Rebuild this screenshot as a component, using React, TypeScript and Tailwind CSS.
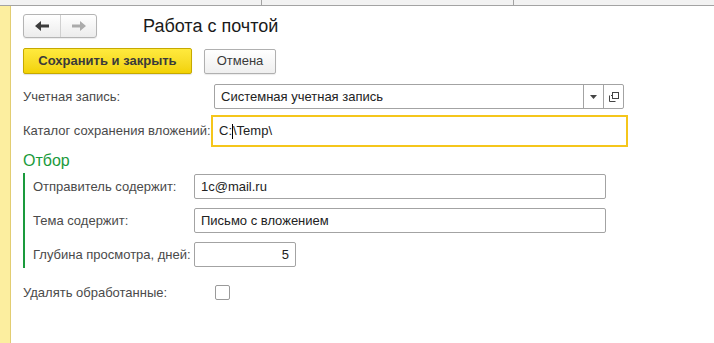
import React from 'react';

const font = "font-['Liberation_Sans',Arial,sans-serif]";

function NavButtons() {
	return (
		<div className=" flex h-[24px] w-[74px] rounded-[3px] border border-[#b4b4b4] bg-gradient-to-b from-white to-[#ececec] shadow-[0_1px_1px_rgba(0,0,0,0.08)]">
			<div className=" flex w-[37px] items-center justify-center border-r border-[#d0d0d0]">
				<svg width="14" height="10" viewBox="0 0 14 10">
					<path d="M0 5 L6 0 L6 3.5 L14 3.5 L14 6.5 L6 6.5 L6 10 Z" fill="#3c3c3c" />
				</svg>
			</div>
			<div className=" flex flex-1 items-center justify-center">
				<svg width="14" height="10" viewBox="0 0 14 10">
					<path d="M14 5 L8 0 L8 3.5 L0 3.5 L0 6.5 L8 6.5 L8 10 Z" fill="#ababab" />
				</svg>
			</div>
		</div>
	);
}

function Field({ children, className = '' }: { children?: React.ReactNode; className?: string }) {
	return (
		<div className={` flex h-[25px] items-center rounded-[2px] border border-[#a3a3a3] bg-white px-[6px] text-[13px] text-[#222] ${className}`}>
			{children}
		</div>
	);
}

export default function App() {
	return (
		<div className={` flex h-[343px] w-[714px] flex-col overflow-hidden bg-white ${font}`}>
			<div className=" flex h-[6px] border-b border-[#a3a3a3] bg-[#f2f2f2]">
				<div className=" w-[262px] border-r border-[#a3a3a3]" />
				<div className=" w-[252px] border-r border-[#a3a3a3]" />
				<div className=" flex-1" />
			</div>
			<div className=" flex flex-1">
				<div className=" w-[11px] border-r border-[#e2cd72] bg-[#fcee9f]" />
				<div className=" flex flex-1 flex-col pl-[12px] text-[13px] text-[#4a4a4a]">
					<div className=" mt-[8px] flex h-[24px] items-center">
						<NavButtons />
						<div className=" ml-[46px] text-[18px] leading-none text-[#1a1a1a]">Работа с почтой</div>
					</div>
					<div className=" mt-[10px] flex h-[26px] items-center gap-[12px]">
						<button className=" h-[26px] w-[169px] rounded-[2px] border border-[#c6a900] bg-gradient-to-b from-[#ffea3d] to-[#f2d200] text-[13px] font-bold text-[#3a3a3a] shadow-[0_1px_1px_rgba(0,0,0,0.12)]">
							Сохранить и закрыть
						</button>
						<button className=" h-[25px] w-[72px] rounded-[2px] border border-[#b0b0b0] bg-gradient-to-b from-white to-[#efefef] text-[13px] text-[#3a3a3a] shadow-[0_1px_1px_rgba(0,0,0,0.08)]">
							Отмена
						</button>
					</div>
					<div className=" mt-[10px] flex h-[25px] items-center">
						<div className=" w-[191px]">Учетная запись:</div>
						<div className=" flex h-[25px] w-[410px] items-center rounded-[2px] border border-[#a3a3a3] bg-white text-[13px] text-[#222]">
							<div className=" flex-1 pl-[6px]">Системная учетная запись</div>
							<div className=" flex h-full w-[20px] items-center justify-center border-l border-[#a3a3a3]">
								<svg width="7" height="4" viewBox="0 0 7 4">
									<path d="M0 0 L7 0 L3.5 4 Z" fill="#444" />
								</svg>
							</div>
							<div className=" flex h-full w-[20px] items-center justify-center border-l border-[#a3a3a3]">
								<svg width="10" height="10" viewBox="0 0 10 10" fill="none" stroke="#444" strokeWidth="1">
									<rect x="3.5" y="0.5" width="6" height="6" />
									<path d="M0.5 3.5 L0.5 9.5 L6.5 9.5" />
									<path d="M2 3.5 L3.5 3.5" />
								</svg>
							</div>
						</div>
					</div>
					<div className=" mt-[6px] flex h-[32px] items-center">
						<div className=" w-[188px]">Каталог сохранения вложений:</div>
						<div className=" flex h-[32px] w-[417px] items-center border-2 border-[#f5c61b] bg-white pl-[6px] text-[13px] text-[#222]">
							C:<span className=" inline-block h-[15px] w-[1px] bg-black" />\Temp\
						</div>
					</div>
					<div className=" mt-[2px] h-[24px] text-[16px] leading-[24px] text-[#1a9a3c]">Отбор</div>
					<div className=" flex flex-col gap-[9px] border-l-2 border-[#1a9a3c] py-[1px] pl-[8px]">
						<div className=" flex h-[25px] items-center">
							<div className=" w-[161px]">Отправитель содержит:</div>
							<Field className=" w-[412px]">1c@mail.ru</Field>
						</div>
						<div className=" flex h-[25px] items-center">
							<div className=" w-[161px]">Тема содержит:</div>
							<Field className=" w-[412px]">Письмо с вложением</Field>
						</div>
						<div className=" flex h-[25px] items-center">
							<div className=" w-[161px]">Глубина просмотра, дней:</div>
							<Field className=" w-[102px] justify-end">5</Field>
						</div>
					</div>
					<div className=" mt-[17px] flex h-[15px] items-center">
						<div className=" w-[192px]">Удалять обработанные:</div>
						<div className=" h-[15px] w-[15px] rounded-[2px] border border-[#9a9a9a] bg-white" />
					</div>
				</div>
			</div>
		</div>
	);
}
